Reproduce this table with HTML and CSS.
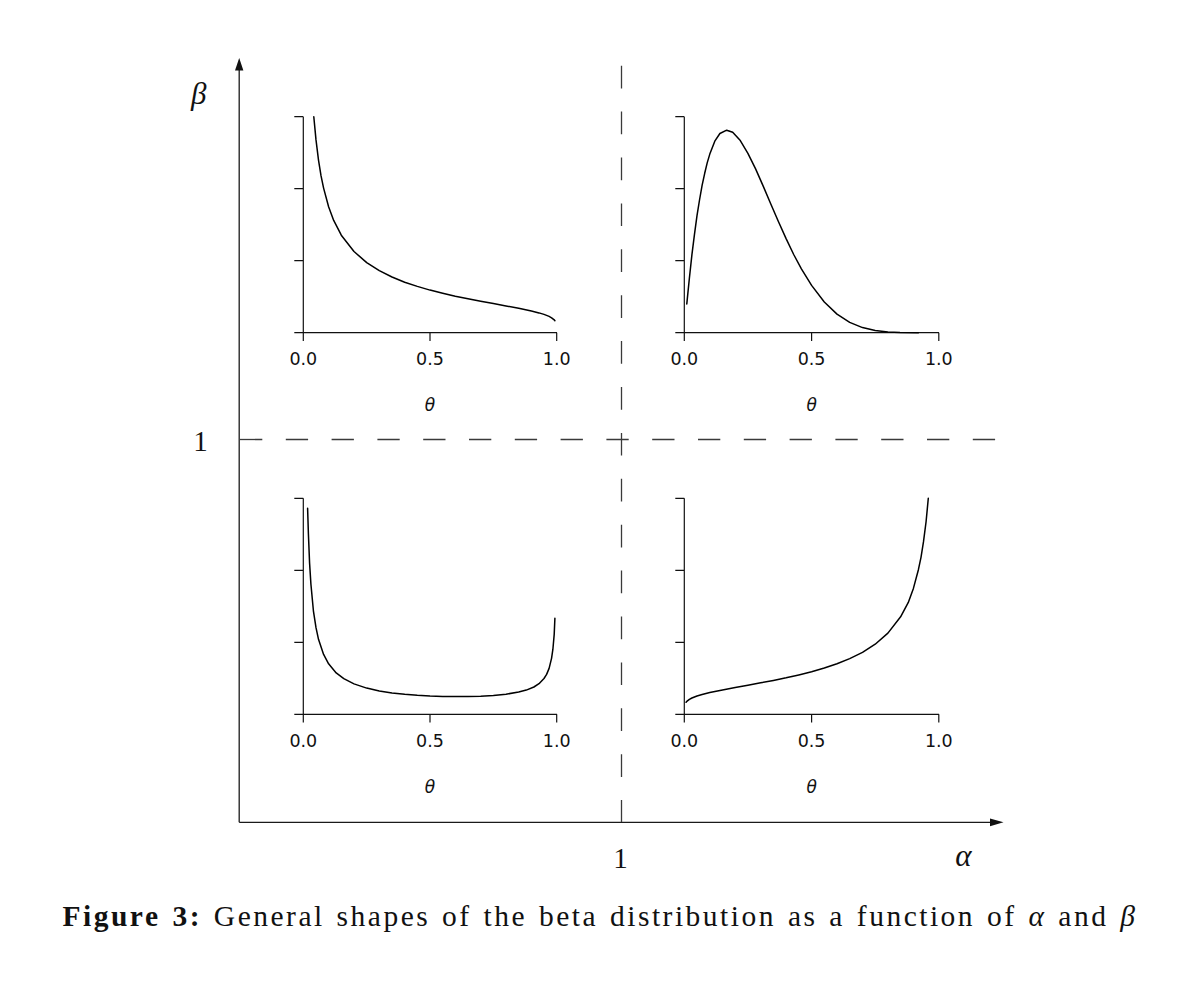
FILE: index.html
```html
<!DOCTYPE html>
<html lang="en">
<head>
<meta charset="utf-8">
<title>Figure 3: General shapes of the beta distribution</title>
<link rel="stylesheet" href="styles.css">
</head>
<body>
<figure class="figure">
  <svg class="diagram" width="1200" height="890" viewBox="0 0 1200 890" xmlns="http://www.w3.org/2000/svg">
    <!-- main axes -->
    <g class="main-axis">
      <line x1="239.2" y1="822.3" x2="239.2" y2="66"/>
      <line x1="239.2" y1="822.3" x2="996" y2="822.3"/>
    </g>
    <polygon class="arrow" points="239.2,58 235,70.5 243.4,70.5"/>
    <polygon class="arrow" points="1003.5,822.3 990,818.4 990,826.2"/>

    <!-- dashed reference lines -->
    <line class="dash" x1="621.5" y1="65.7" x2="621.5" y2="822" stroke-dasharray="22.7 23.2"/>
    <line class="dash" x1="240" y1="439.5" x2="996" y2="439.5" stroke-dasharray="22.3 23.5"/>

    <!-- main labels -->
    <text class="math italic" x="191" y="104">β</text>
    <text class="math" x="200.5" y="451" text-anchor="middle">1</text>
    <text class="math" x="620.5" y="868" text-anchor="middle">1</text>
    <text class="math italic" x="963.5" y="866" text-anchor="middle">α</text>

    <!-- panel: top-left -->
    <g class="panel">
      <path class="frame" d="M303.3 116.7 V332.7 M294.3 116.7 H303.3 M294.3 188.7 H303.3 M294.3 260.7 H303.3 M294.3 332.7 H557 M303.3 332.7 V341 M430 332.7 V341 M556.7 332.7 V341"/>
      <polyline class="curve" points="313.8,116.7 316.0,139.9 318.5,160.1 321.0,175.7 323.6,188.1 328.6,206.8 333.7,220.4 341.3,235.2 354.0,251.5 366.7,262.6 379.3,270.7 392.0,277.0 404.7,282.2 417.3,286.4 430.0,290.1 442.7,293.3 455.3,296.2 468.0,298.8 480.7,301.2 493.4,303.6 506.0,305.9 518.7,308.3 531.4,311.0 539.0,312.9 544.0,314.4 549.1,316.4 551.6,317.8 554.2,319.8 554.9,320.7"/>
      <text class="tick" x="303.3" y="365">0.0</text>
      <text class="tick" x="430" y="365">0.5</text>
      <text class="tick" x="556.7" y="365">1.0</text>
      <text class="theta" x="430" y="411">θ</text>
    </g>

    <!-- panel: top-right -->
    <g class="panel">
      <path class="frame" d="M684.3 116.7 V332.7 M675.3 116.7 H684.3 M675.3 188.7 H684.3 M675.3 260.7 H684.3 M675.3 332.7 H939 M684.3 332.7 V341 M811.6 332.7 V341 M938.8 332.7 V341"/>
      <polyline class="curve" points="686.8,303.9 689.4,278.0 691.9,254.8 694.5,234.1 697.0,215.7 699.6,199.5 702.1,185.4 704.7,173.3 707.2,162.9 709.8,154.1 714.8,141.2 719.9,133.5 726.7,130.2 732.7,132.3 740.3,140.6 747.9,153.3 755.6,168.9 763.2,186.1 770.8,204.0 778.5,221.7 786.1,238.6 793.7,254.5 801.4,268.8 811.6,285.4 824.3,302.0 837.0,314.1 849.7,322.4 862.5,327.6 875.2,330.5 887.9,331.9 900.0,332.5 918.4,332.7"/>
      <text class="tick" x="684.3" y="365">0.0</text>
      <text class="tick" x="811.6" y="365">0.5</text>
      <text class="tick" x="938.8" y="365">1.0</text>
      <text class="theta" x="811.6" y="411">θ</text>
    </g>

    <!-- panel: bottom-left -->
    <g class="panel">
      <path class="frame" d="M303.3 498.3 V714.3 M294.3 498.3 H303.3 M294.3 570.3 H303.3 M294.3 642.3 H303.3 M294.3 714.3 H557 M303.3 714.3 V722.6 M430 714.3 V722.6 M556.7 714.3 V722.6"/>
      <polyline class="curve" points="307.6,508.3 308.4,533.8 309.6,563.4 310.9,584.0 313.4,610.8 316.0,627.7 318.5,639.3 323.6,654.4 328.6,663.8 336.2,672.9 343.8,678.7 354.0,683.9 366.7,688.1 379.3,691.0 392.0,692.9 404.7,694.3 417.3,695.3 430.0,696.0 442.7,696.4 455.3,696.6 468.0,696.5 480.7,696.2 493.4,695.5 506.0,694.2 518.7,692.1 526.3,690.1 533.9,687.0 539.0,683.7 544.0,678.5 546.6,674.4 549.1,668.4 551.6,658.1 552.9,649.2 554.2,634.4 554.9,618.3"/>
      <text class="tick" x="303.3" y="746.6">0.0</text>
      <text class="tick" x="430" y="746.6">0.5</text>
      <text class="tick" x="556.7" y="746.6">1.0</text>
      <text class="theta" x="430" y="793">θ</text>
    </g>

    <!-- panel: bottom-right -->
    <g class="panel">
      <path class="frame" d="M684.3 498.3 V714.3 M675.3 498.3 H684.3 M675.3 570.3 H684.3 M675.3 642.3 H684.3 M675.3 714.3 H939 M684.3 714.3 V722.6 M811.6 714.3 V722.6 M938.8 714.3 V722.6"/>
      <polyline class="curve" points="686.1,702.3 686.8,701.4 689.4,699.4 691.9,698.0 697.0,696.0 702.1,694.5 709.8,692.6 722.5,689.9 735.2,687.5 747.9,685.2 760.7,682.8 773.4,680.4 786.1,677.8 798.8,674.9 811.6,671.7 824.3,668.0 837.0,663.8 849.7,658.6 862.5,652.3 875.2,644.2 887.9,633.1 900.6,616.8 908.3,602.4 913.4,588.4 918.4,569.7 921.0,557.3 923.5,541.7 926.1,521.5 928.3,498.3"/>
      <text class="tick" x="684.3" y="746.6">0.0</text>
      <text class="tick" x="811.6" y="746.6">0.5</text>
      <text class="tick" x="938.8" y="746.6">1.0</text>
      <text class="theta" x="811.6" y="793">θ</text>
    </g>
  </svg>
  <figcaption class="caption"><b class="caption-label">Figure 3:</b> General shapes of the beta distribution as a function of <i>α</i> and <i>β</i></figcaption>
</figure>
</body>
</html>
```

FILE: styles.css
```css
html, body {
  margin: 0;
  padding: 0;
  background: #ffffff;
}

.figure {
  margin: 0;
  width: 1200px;
  display: flex;
  flex-direction: column;
  align-items: center;
}

.diagram {
  display: block;
}

.main-axis line {
  stroke: #1a1a1a;
  stroke-width: 1.3;
}

.arrow {
  fill: #111111;
}

.dash {
  stroke: #3a3a3a;
  stroke-width: 1.3;
}

.math {
  font-family: "Liberation Serif", "DejaVu Serif", serif;
  font-size: 29px;
  fill: #111111;
}

.math.italic {
  font-style: italic;
  font-size: 31px;
}

.frame {
  fill: none;
  stroke: #111111;
  stroke-width: 1.2;
}

.curve {
  fill: none;
  stroke: #000000;
  stroke-width: 1.5;
  stroke-linejoin: round;
  stroke-linecap: round;
}

.tick {
  font-family: "DejaVu Sans", sans-serif;
  font-size: 17.5px;
  fill: #111111;
  text-anchor: middle;
}

.theta {
  font-family: "DejaVu Sans", sans-serif;
  font-style: italic;
  font-size: 17px;
  fill: #111111;
  text-anchor: middle;
}

.caption {
  font-family: "Liberation Serif", "DejaVu Serif", serif;
  font-size: 29.5px;
  line-height: 40px;
  color: #111111;
  margin-top: 6px;
  white-space: nowrap;
  letter-spacing: 2.5px;
  word-spacing: 2px;
}

.caption-label {
  font-weight: bold;
}
```
